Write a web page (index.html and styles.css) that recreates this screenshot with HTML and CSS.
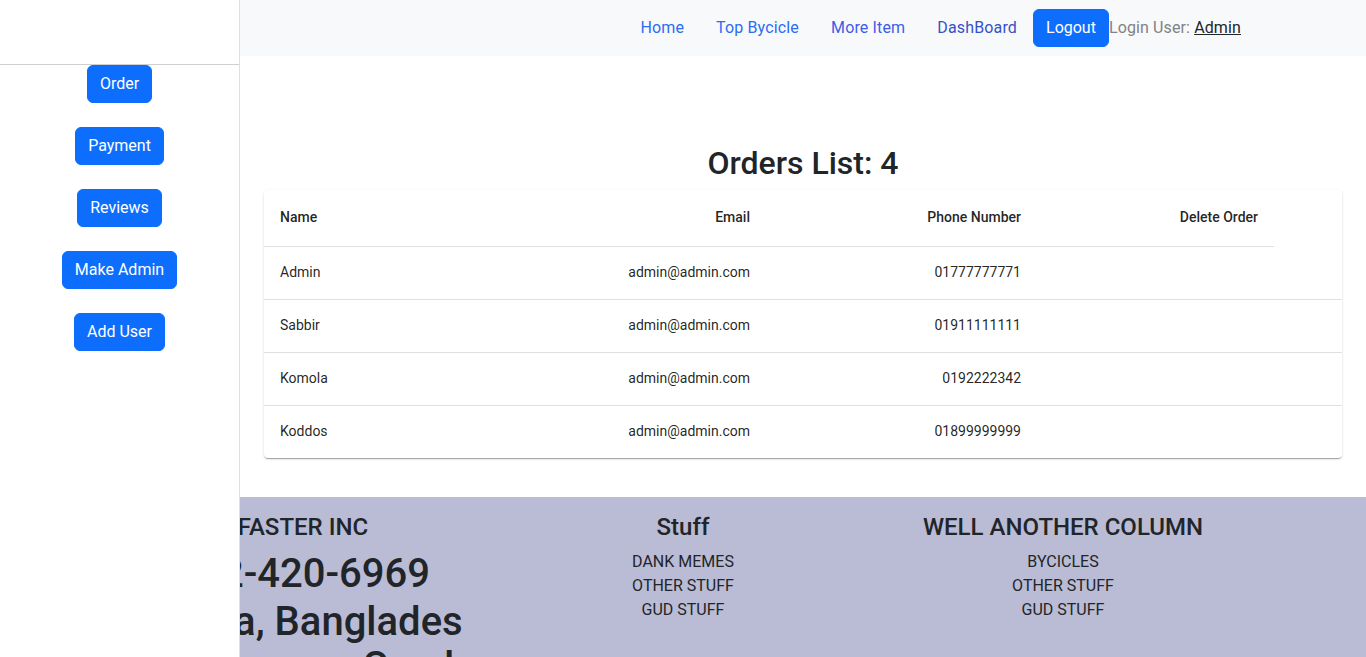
FILE: index.html
```html
<!DOCTYPE html>
<html lang="en">
<head>
<meta charset="utf-8">
<title>Orders List</title>
<link rel="stylesheet" href="styles.css">
</head>
<body>
<nav class="topbar">
  <div class="container nav-inner">
    <a class="nav-link" href="#">Home</a>
    <a class="nav-link" href="#">Top Bycicle</a>
    <a class="nav-link visited" href="#">More Item</a>
    <a class="nav-link visited dark" href="#">DashBoard</a>
    <button class="btn">Logout</button>
    <span class="login">Login User: <a class="user" href="#">Admin</a></span>
  </div>
</nav>

<aside class="drawer">
  <div class="drawer-toolbar"></div>
  <div class="divider"></div>
  <div class="drawer-menu">
    <button class="btn">Order</button>
    <button class="btn">Payment</button>
    <button class="btn">Reviews</button>
    <button class="btn">Make Admin</button>
    <button class="btn">Add User</button>
  </div>
</aside>

<div class="layout">
  <div class="drawer-space"></div>
  <main class="main">
    <div class="toolbar-space"></div>
    <h2 class="title">Orders List: 4</h2>
    <div class="paper">
      <table class="orders">
        <colgroup>
          <col class="c1"><col class="c2"><col class="c3"><col class="c4"><col class="c5">
        </colgroup>
        <thead>
          <tr>
            <th class="left">Name</th>
            <th class="right">Email</th>
            <th class="right">Phone Number</th>
            <th class="right">Delete Order</th>
          </tr>
        </thead>
        <tbody>
          <tr><td class="left">Admin</td><td class="right">admin@admin.com</td><td class="right">01777777771</td><td></td><td></td></tr>
          <tr><td class="left">Sabbir</td><td class="right">admin@admin.com</td><td class="right">01911111111</td><td></td><td></td></tr>
          <tr><td class="left">Komola</td><td class="right">admin@admin.com</td><td class="right">0192222342</td><td></td><td></td></tr>
          <tr><td class="left">Koddos</td><td class="right">admin@admin.com</td><td class="right">01899999999</td><td></td><td></td></tr>
        </tbody>
      </table>
    </div>
  </main>
</div>

<footer class="footer">
  <div class="container footer-row">
    <div class="fcol">
      <h4 class="fhead">FASTER INC</h4>
      <p class="big">+12-420-6969</p>
      <p class="big">Dhaka, Banglades</p>
      <p class="big big-last">so near our Sand</p>
    </div>
    <div class="fcol">
      <h4 class="fhead">Stuff</h4>
      <ul class="flist">
        <li>DANK MEMES</li>
        <li>OTHER STUFF</li>
        <li>GUD STUFF</li>
      </ul>
    </div>
    <div class="fcol">
      <h4 class="fhead">WELL ANOTHER COLUMN</h4>
      <ul class="flist">
        <li>BYCICLES</li>
        <li>OTHER STUFF</li>
        <li>GUD STUFF</li>
      </ul>
    </div>
  </div>
</footer>
</body>
</html>
```

FILE: styles.css
```css
* { box-sizing: border-box; }

html, body {
  margin: 0;
  padding: 0;
}

body {
  font-family: Roboto, "Liberation Sans", Arial, sans-serif;
  font-size: 16px;
  line-height: 1.5;
  color: #212529;
  background: #fff;
}

.container {
  width: 1140px;
  margin: 0 auto;
  padding: 0 12px;
}

/* top navbar */
.topbar {
  background: #f8f9fa;
  height: 56px;
  padding: 8px 0;
}

.nav-inner {
  display: flex;
  justify-content: flex-end;
  align-items: center;
  height: 40px;
}

.nav-link {
  color: #2b6df3;
  text-decoration: none;
  padding: 8px 16px;
  line-height: 24px;
  letter-spacing: 0.15px;
}

.nav-link.visited { color: #3e5de6; }
.nav-link.dark { color: #3451c8; }

.btn {
  font-family: inherit;
  font-size: 16px;
  line-height: 24px;
  color: #fff;
  background: #0d6efd;
  border: 1px solid #0d6efd;
  border-radius: 6px;
  padding: 6px 12px;
  cursor: pointer;
}

.login {
  color: #808285;
  line-height: 24px;
  letter-spacing: 0.12px;
}

.user {
  color: #212529;
  text-decoration: underline;
}

/* drawer */
.drawer {
  position: fixed;
  top: 0;
  left: 0;
  width: 240px;
  height: 100%;
  background: #fff;
  border-right: 1px solid #e0e0e0;
  z-index: 10;
}

.drawer-toolbar { height: 64px; }

.divider {
  height: 1px;
  background: #cfcfcf;
}

.drawer-menu {
  display: flex;
  flex-direction: column;
  align-items: center;
  gap: 24px;
}

/* main */
.layout { display: flex; }

.drawer-space {
  width: 240px;
  flex-shrink: 0;
}

.main {
  flex: 1;
  padding: 24px;
}

.toolbar-space { height: 64px; }

.title {
  margin: 0 0 8px;
  text-align: center;
  font-size: 32px;
  font-weight: 500;
  line-height: 38.4px;
  color: #212529;
}

.paper {
  background: #fff;
  border-radius: 4px;
  box-shadow: 0 2px 1px -1px rgba(0,0,0,0.2), 0 1px 1px 0 rgba(0,0,0,0.14), 0 1px 3px 0 rgba(0,0,0,0.12);
  overflow: hidden;
}

.orders {
  width: 100%;
  border-collapse: collapse;
  table-layout: fixed;
  font-size: 14px;
}

.c1 { width: 256px; }
.c2 { width: 246px; }
.c3 { width: 271px; }
.c4 { width: 237px; }
.c5 { width: 68px; }

.orders th,
.orders td {
  padding: 16px;
  border-bottom: 1px solid #e0e0e0;
  color: rgba(0,0,0,0.87);
}

.orders th {
  font-weight: 500;
  line-height: 22px;
  padding-bottom: 18px;
}

.orders td {
  font-weight: 400;
  line-height: 20px;
  padding-top: 15px;
  padding-bottom: 17px;
}

.orders tbody tr:last-child td { border-bottom: none; }

.left { text-align: left; }
.right { text-align: right; }

/* footer */
.footer {
  margin-top: 15px;
  background: #babbd4;
  padding: 16px 0 40px;
}

.footer-row {
  display: grid;
  grid-template-columns: repeat(3, minmax(0, 1fr));
  padding: 0;
}

.fcol {
  padding: 0 12px;
  text-align: center;
}

.fhead {
  margin: 0 0 8px;
  font-size: 24px;
  font-weight: 500;
  line-height: 28.8px;
  color: #212529;
}

.big {
  margin: 0;
  font-size: 40px;
  font-weight: 500;
  line-height: 48px;
}

.big-last {
  margin-top: -3px;
}

.flist {
  list-style: none;
  margin: 0;
  padding: 0;
  line-height: 24px;
}
```
